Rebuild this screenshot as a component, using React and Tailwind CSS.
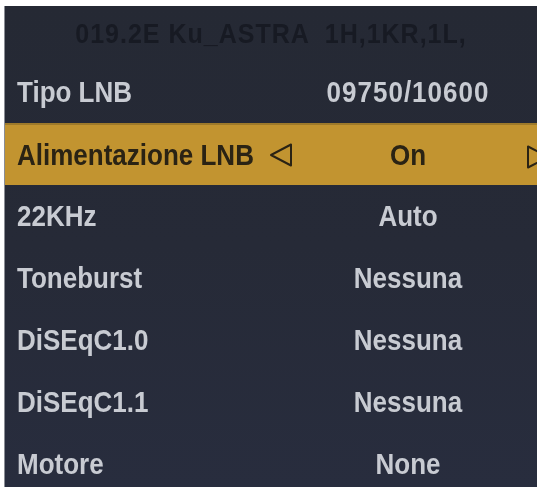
import React from "react";

const rows = [
  { label: "Tipo LNB", value: "09750/10600", wide: true },
  { label: "Alimentazione LNB", value: "On", active: true },
  { label: "22KHz", value: "Auto" },
  { label: "Toneburst", value: "Nessuna" },
  { label: "DiSEqC1.0", value: "Nessuna" },
  { label: "DiSEqC1.1", value: "Nessuna" },
  { label: "Motore", value: "None" },
];

function LeftTri() {
  return (
    <svg width="24" height="24" viewBox="0 0 24 24" className="shrink-0 mr-[-3px]">
      <polygon points="22,1.5 22,22.5 2,12" fill="none" stroke="#2a2314" strokeWidth="2" strokeLinejoin="round" />
    </svg>
  );
}

function RightTri() {
  return (
    <svg width="24" height="24" viewBox="0 0 24 24" className="shrink-0 mt-[4px] ml-[6px]">
      <polygon points="2,1.5 2,22.5 22,12" fill="none" stroke="#2a2314" strokeWidth="2" strokeLinejoin="round" />
    </svg>
  );
}

export default function App() {
  return (
    <div className="w-[537px] h-[487px] overflow-hidden bg-white pt-[6px] pl-[4px]" style={{ fontFamily: '"Liberation Sans", Arial, sans-serif' }}>
      <div className="h-full w-full overflow-hidden border-l border-[#8a8d95] bg-gradient-to-b from-[#252934] via-[#262a37] to-[#282d3e]">
        <div className="h-[55px] pt-[13px] text-center text-[25px] font-bold leading-[29px] tracking-[1px] text-[#171a23] whitespace-pre">
          <span className="inline-block scale-y-[1.1] blur-[0.5px]">019.2E Ku_ASTRA  1H,1KR,1L,</span>
        </div>
        {rows.map((r) => (
          <div
            key={r.label}
            className={
              "flex h-[62px] items-center overflow-hidden text-[26px] font-bold leading-[62px] " +
              (r.active
                ? "bg-[#c29430] text-[#2a2314] border-t-2 border-[#9e7a2a]"
                : "text-[#c8cbd2]")
            }
          >
            <div className="flex w-[285px] shrink-0 items-center justify-between pl-[12px]">
              <span className="inline-block scale-y-[1.1] blur-[0.4px]">{r.label}</span>
              {r.active && <LeftTri />}
            </div>
            <div className={"w-[230px] shrink-0 pl-[6px] text-center " + (r.wide ? "tracking-[1px]" : "")}>
              <span className="inline-block scale-y-[1.1] blur-[0.4px]">{r.value}</span>
            </div>
            {r.active && <RightTri />}
          </div>
        ))}
      </div>
    </div>
  );
}
